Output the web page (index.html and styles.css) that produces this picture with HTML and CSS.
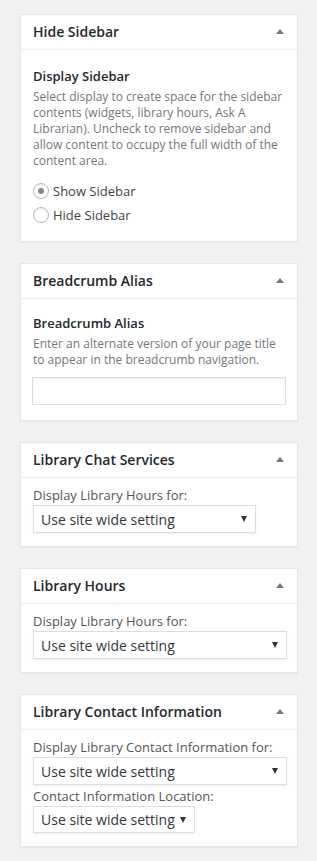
FILE: index.html
```html
<!DOCTYPE html>
<html lang="en">
<head>
    <meta charset="UTF-8">
    <title>Page Settings</title>
    <link rel="stylesheet" href="styles.css">
</head>
<body>
    <div class="sidebar">

        <div class="postbox">
            <div class="hndle">
                <span>Hide Sidebar</span>
                <span class="toggle"></span>
            </div>
            <div class="inside inside-loose">
                <div class="field-title">Display Sidebar</div>
                <p class="description">Select display to create space for the sidebar contents (widgets, library hours, Ask A Librarian). Uncheck to remove sidebar and allow content to occupy the full width of the content area.</p>
                <ul class="radio-list">
                    <li><label><span class="radio checked"></span>Show Sidebar</label></li>
                    <li><label><span class="radio"></span>Hide Sidebar</label></li>
                </ul>
            </div>
        </div>

        <div class="postbox">
            <div class="hndle">
                <span>Breadcrumb Alias</span>
                <span class="toggle"></span>
            </div>
            <div class="inside inside-loose inside-alias">
                <div class="field-title">Breadcrumb Alias</div>
                <p class="description">Enter an alternate version of your page title to appear in the breadcrumb navigation.</p>
                <input type="text" class="text-input">
            </div>
        </div>

        <div class="postbox">
            <div class="hndle">
                <span>Library Chat Services</span>
                <span class="toggle"></span>
            </div>
            <div class="inside">
                <div class="field-label">Display Library Hours for:</div>
                <div class="select select-mid"><span>Use site wide setting</span><span class="caret"></span></div>
            </div>
        </div>

        <div class="postbox">
            <div class="hndle">
                <span>Library Hours</span>
                <span class="toggle"></span>
            </div>
            <div class="inside">
                <div class="field-label">Display Library Hours for:</div>
                <div class="select"><span>Use site wide setting</span><span class="caret"></span></div>
            </div>
        </div>

        <div class="postbox">
            <div class="hndle">
                <span>Library Contact Information</span>
                <span class="toggle"></span>
            </div>
            <div class="inside">
                <div class="field-label">Display Library Contact Information for:</div>
                <div class="select"><span>Use site wide setting</span><span class="caret"></span></div>
                <div class="field-label">Contact Information Location:</div>
                <div class="select select-small"><span>Use site wide setting</span><span class="caret"></span></div>
            </div>
        </div>

    </div>
</body>
</html>
```

FILE: styles.css
```css
* {
    margin: 0;
    padding: 0;
    box-sizing: border-box;
}
body {
    background: #f1f1f1;
    font-family: 'Open Sans', sans-serif;
    color: #444;
}
.sidebar {
    padding: 14px 19px 0 20px;
}
.postbox {
    background: #fff;
    border: 1px solid #e5e5e5;
    box-shadow: 0 1px 1px rgba(0, 0, 0, 0.04);
    margin-bottom: 21px;
}
.hndle {
    display: flex;
    justify-content: space-between;
    align-items: center;
    padding: 7px 12px 8px;
    font-size: 14px;
    font-weight: 600;
    line-height: 19px;
    color: #23282d;
    border-bottom: 1px solid #eee;
}
.toggle {
    width: 0;
    height: 0;
    margin-right: 1px;
    border-left: 4px solid transparent;
    border-right: 4px solid transparent;
    border-bottom: 5px solid #72777c;
}
.inside {
    padding: 8px 12px 13px;
}
.inside-loose {
    padding: 17px 12px 14px;
}
.inside-alias {
    padding: 15px 12px 15px;
}
.field-title {
    font-size: 13px;
    font-weight: 600;
    line-height: 18px;
    color: #23282d;
}
.description {
    font-size: 12px;
    line-height: 16px;
    color: #72777c;
    margin-top: 4px;
}
.radio-list {
    list-style: none;
    margin-top: 10px;
}
.radio-list li {
    height: 24px;
    display: flex;
    align-items: center;
}
.radio-list label {
    display: flex;
    align-items: center;
    font-size: 13px;
    line-height: 18px;
    color: #444;
}
.radio {
    width: 16px;
    height: 16px;
    margin-right: 4px;
    border: 1px solid #b4b9be;
    border-radius: 50%;
    box-shadow: inset 0 1px 2px rgba(0, 0, 0, 0.07);
    display: flex;
    align-items: center;
    justify-content: center;
}
.radio.checked::before {
    content: "";
    width: 6px;
    height: 6px;
    border-radius: 50%;
    background: #7e8993;
}
.text-input {
    display: block;
    width: 254px;
    height: 28px;
    margin: 9px 0 0 -1px;
    border: 1px solid #ddd;
    box-shadow: inset 0 1px 2px rgba(0, 0, 0, 0.07);
    background: #fff;
}
.field-label {
    font-size: 13px;
    line-height: 19px;
    color: #555;
}
.select + .field-label {
    margin-top: 2px;
}
.select {
    display: flex;
    justify-content: space-between;
    align-items: center;
    width: 254px;
    height: 28px;
    padding: 0 8px 0 7px;
    border: 1px solid #ddd;
    box-shadow: 0 1px 2px rgba(0, 0, 0, 0.07);
    font-size: 14px;
    color: #32373c;
}
.select-mid {
    width: 223px;
}
.select-small {
    width: 162px;
    height: 27px;
}
.caret {
    width: 0;
    height: 0;
    border-left: 3px solid transparent;
    border-right: 3px solid transparent;
    border-top: 6px solid #32373c;
}
```
